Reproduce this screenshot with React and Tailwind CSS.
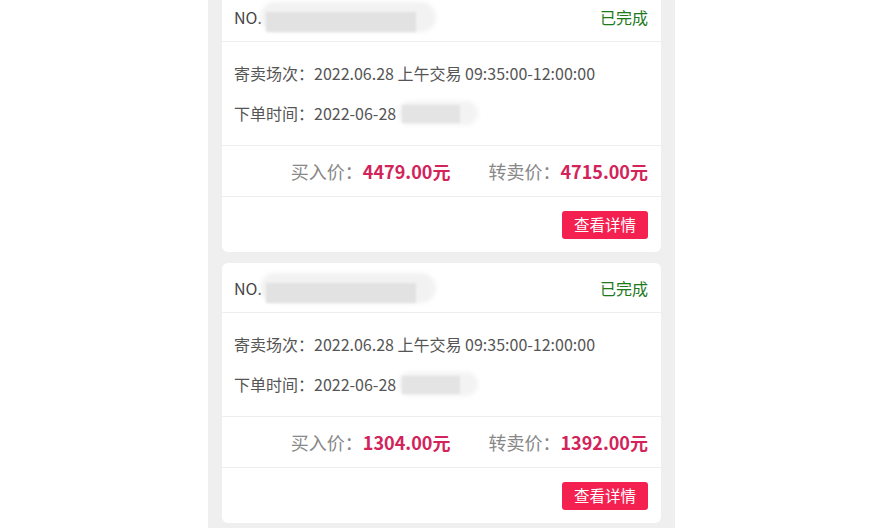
import React from "react";

const font = { fontFamily: '"Noto Sans CJK SC", "Noto Sans", sans-serif' };

function Card({ buy, sell, first }) {
  return (
    <div className={`bg-white rounded-md w-[439px] ${first ? "mt-[-8px]" : ""}`}>
      <div className="h-[50px] px-3 pr-[13px] flex items-center justify-between border-b border-[#eeeeee] relative">
        <div className="flex items-center text-[16px] text-[#444444]">
          <span>NO.</span>
          <span className="relative ml-[-2px]">
            <span className="block w-[176px] h-[30px] rounded-full bg-[#f2f2f2] blur-[2px]"></span>
            <span className="absolute left-[6px] top-[10px] block w-[150px] h-[20px] bg-[#e2e2e2] blur-[1px]"></span>
          </span>
        </div>
        <span className="text-[16px] text-[#1d7a1d]">已完成</span>
      </div>
      <div className="h-[104px] px-3 flex flex-col justify-center gap-[18px] border-b border-[#eeeeee] text-[16px] text-[#555555]">
        <div className="leading-5">寄卖场次：2022.06.28 上午交易 09:35:00-12:00:00</div>
        <div className="leading-5 flex items-center">
          <span>下单时间：2022-06-28</span>
          <span className="relative ml-[2px]">
            <span className="block w-[80px] h-[24px] rounded-full bg-[#f3f3f3] blur-[2px]"></span>
            <span className="absolute left-[4px] top-[4px] block w-[58px] h-[18px] bg-[#e4e4e4] blur-[1px]"></span>
          </span>
        </div>
      </div>
      <div className="h-[51px] pr-[13px] flex items-center justify-end gap-[38px] border-b border-[#eeeeee] text-[18px]">
        <div>
          <span className="text-[#888888]">买入价：</span>
          <span className="font-bold text-[#d2235a]">{buy}元</span>
        </div>
        <div>
          <span className="text-[#888888]">转卖价：</span>
          <span className="font-bold text-[#d2235a]">{sell}元</span>
        </div>
      </div>
      <div className="h-[55px] pr-[13px] flex items-center justify-end">
        <button className="w-[86px] h-[28px] rounded-[3px] bg-[#f4204f] text-white text-[15.5px] leading-none flex items-center justify-center">
          查看详情
        </button>
      </div>
    </div>
  );
}

export default function App() {
  return (
    <div className="w-[883px] h-[528px] bg-white overflow-hidden flex justify-center" style={font}>
      <div className="w-[467px] h-[528px] bg-[#efefef] px-[14px] flex flex-col gap-[11px]">
        <Card buy="4479.00" sell="4715.00" first />
        <Card buy="1304.00" sell="1392.00" />
      </div>
    </div>
  );
}
